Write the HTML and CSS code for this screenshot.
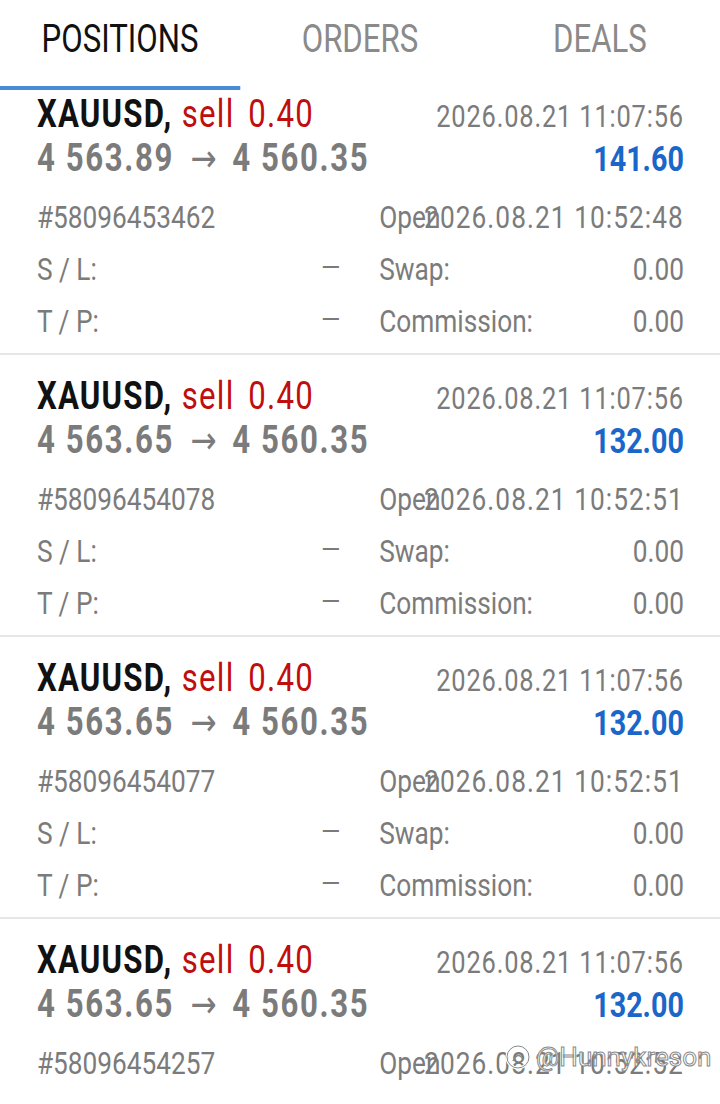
FILE: index.html
```html
<!DOCTYPE html>
<html>
<head>
<meta charset="utf-8">
<title>Positions</title>
<link rel="stylesheet" href="styles.css">
</head>
<body>
<div class="page">
  <nav class="tabs">
    <div class="tab active">POSITIONS</div>
    <div class="tab">ORDERS</div>
    <div class="tab">DEALS</div>
  </nav>
  <div class="track"><div class="indicator"></div></div>
  <main class="list">
    <section class="card">
      <div class="row head"><span class="title"><span class="sym">XAUUSD,</span> <span class="side">sell 0.40</span></span><span class="time">2026.08.21 11:07:56</span></div>
      <div class="row prices"><span class="price">4 563.89<span class="arrow">→</span>4 560.35</span><span class="profit">141.60</span></div>
      <div class="details">
        <div class="cell"><span class="label">#58096453462</span></div>
        <div class="cell"><span class="label">Open</span><span class="val date">2026.08.21 10:52:48</span></div>
        <div class="cell"><span class="label">S / L:</span><span class="val dash">–</span></div>
        <div class="cell"><span class="label">Swap:</span><span class="val">0.00</span></div>
        <div class="cell"><span class="label">T / P:</span><span class="val dash">–</span></div>
        <div class="cell"><span class="label">Commission:</span><span class="val">0.00</span></div>
      </div>
    </section>
    <section class="card">
      <div class="row head"><span class="title"><span class="sym">XAUUSD,</span> <span class="side">sell 0.40</span></span><span class="time">2026.08.21 11:07:56</span></div>
      <div class="row prices"><span class="price">4 563.65<span class="arrow">→</span>4 560.35</span><span class="profit">132.00</span></div>
      <div class="details">
        <div class="cell"><span class="label">#58096454078</span></div>
        <div class="cell"><span class="label">Open</span><span class="val date">2026.08.21 10:52:51</span></div>
        <div class="cell"><span class="label">S / L:</span><span class="val dash">–</span></div>
        <div class="cell"><span class="label">Swap:</span><span class="val">0.00</span></div>
        <div class="cell"><span class="label">T / P:</span><span class="val dash">–</span></div>
        <div class="cell"><span class="label">Commission:</span><span class="val">0.00</span></div>
      </div>
    </section>
    <section class="card">
      <div class="row head"><span class="title"><span class="sym">XAUUSD,</span> <span class="side">sell 0.40</span></span><span class="time">2026.08.21 11:07:56</span></div>
      <div class="row prices"><span class="price">4 563.65<span class="arrow">→</span>4 560.35</span><span class="profit">132.00</span></div>
      <div class="details">
        <div class="cell"><span class="label">#58096454077</span></div>
        <div class="cell"><span class="label">Open</span><span class="val date">2026.08.21 10:52:51</span></div>
        <div class="cell"><span class="label">S / L:</span><span class="val dash">–</span></div>
        <div class="cell"><span class="label">Swap:</span><span class="val">0.00</span></div>
        <div class="cell"><span class="label">T / P:</span><span class="val dash">–</span></div>
        <div class="cell"><span class="label">Commission:</span><span class="val">0.00</span></div>
      </div>
    </section>
    <section class="card">
      <div class="row head"><span class="title"><span class="sym">XAUUSD,</span> <span class="side">sell 0.40</span></span><span class="time">2026.08.21 11:07:56</span></div>
      <div class="row prices"><span class="price">4 563.65<span class="arrow">→</span>4 560.35</span><span class="profit">132.00</span></div>
      <div class="details">
        <div class="cell"><span class="label">#58096454257</span></div>
        <div class="cell"><span class="label">Open</span><span class="val date">2026.08.21 10:52:52</span></div>
        <div class="cell"><span class="label">S / L:</span><span class="val dash">–</span></div>
        <div class="cell"><span class="label">Swap:</span><span class="val">0.00</span></div>
        <div class="cell"><span class="label">T / P:</span><span class="val dash">–</span></div>
        <div class="cell"><span class="label">Commission:</span><span class="val">0.00</span></div>
      </div>
    </section>
  </main>
</div>
<div class="watermark">
  <svg class="wm-logo" width="30" height="30" viewBox="0 0 30 30"><circle cx="15" cy="15" r="11" fill="none" stroke="#fff" stroke-width="3"/><circle cx="15" cy="15" r="11" fill="none" stroke="#888" stroke-width="1"/><path d="M10 19 q5 -10 10 -2" fill="none" stroke="#888" stroke-width="1.5"/></svg>
  <span class="wm-text">@Hunnykreson</span>
</div>
</body>
</html>
```
FILE: styles.css
```css
html, body {
  margin: 0;
  padding: 0;
  background: #ffffff;
  overflow: hidden;
  width: 720px;
  height: 1104px;
}

body {
  position: relative;
  font-family: Roboto, "Noto Sans", sans-serif;
  color: #7b7b7b;
}

.page {
  width: 878px;
  transform: scaleX(0.82);
  transform-origin: 0 0;
}

.tabs {
  display: flex;
  height: 86px;
}

.tab {
  flex: 1;
  text-align: center;
  font-size: 38px;
  line-height: 78px;
  color: #8a8a8a;
}

.tab.active {
  color: #111111;
}

.track {
  height: 4px;
}

.indicator {
  width: 33.333%;
  height: 4px;
  background: #4a8bd6;
}

.card {
  padding: 19px 44px 6px 45px;
  border-bottom: 2px solid #e6e6e6;
}

.card:first-child {
  padding-top: 2px;
}

.row {
  display: flex;
  justify-content: space-between;
  align-items: baseline;
  height: 44px;
  line-height: 44px;
}

.title {
  letter-spacing: 1.5px;
  word-spacing: 6px;
}

.sym {
  font-size: 38px;
  font-weight: 700;
  color: #111111;
}

.side {
  font-size: 38px;
  color: #c00d0d;
}

.time {
  font-size: 31px;
  letter-spacing: 1px;
  color: #7b7b7b;
}

.price {
  font-size: 38px;
  font-weight: 700;
  letter-spacing: 2px;
  color: #7b7b7b;
}

.arrow {
  font-family: "DejaVu Sans", sans-serif;
  font-size: 38px;
  font-weight: 400;
  letter-spacing: 0;
  padding: 0 19px 0 20px;
}

.profit {
  font-size: 35px;
  font-weight: 700;
  color: #1a66c9;
}

.details {
  margin-top: 11px;
  display: grid;
  grid-template-columns: 1fr 1fr;
  column-gap: 46px;
  font-size: 32px;
  line-height: 52px;
}

.cell {
  display: grid;
}

.cell > span {
  grid-area: 1 / 1;
}

.label {
  justify-self: start;
}

.val {
  justify-self: end;
}

.val.date {
  letter-spacing: 1.3px;
}

.val.dash {
  font-size: 40px;
  font-weight: 300;
}

.watermark {
  position: absolute;
  left: 503px;
  top: 1042px;
  display: flex;
  align-items: center;
  gap: 3px;
}

.wm-text {
  font-family: Roboto, sans-serif;
  font-size: 26px;
  color: #ffffff;
  -webkit-text-stroke: 1px #8a8a8a;
}
```
